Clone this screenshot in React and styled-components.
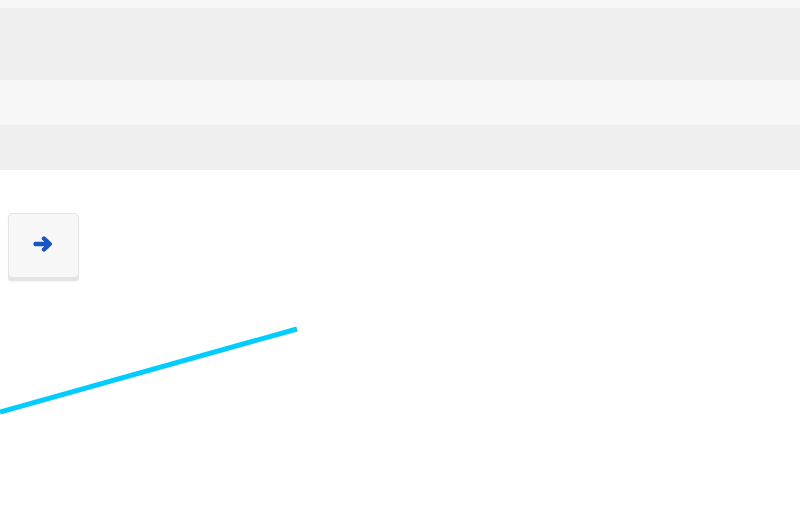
import React from 'react';
import styled, { createGlobalStyle } from 'styled-components';

const Global = createGlobalStyle`
  html, body {
    margin: 0;
    padding: 0;
    background: #fff;
    font-family: "Open Sans", "Liberation Sans", sans-serif;
  }
`;

const Page = styled.div`
  width: 800px;
  height: 510px;
  overflow: hidden;
  display: flex;
  flex-direction: column;
`;

const Band = styled.div`
  height: ${(p) => p.h}px;
  background: ${(p) => (p.light ? '#f7f7f7' : '#efefef')};
`;

const Body = styled.div`
  padding: 43px 8px 0;
  display: flex;
  flex-direction: column;
`;

const NextButton = styled.button`
  width: 71px;
  height: 65px;
  box-sizing: border-box;
  display: flex;
  align-items: center;
  justify-content: center;
  padding: 0 2px 3px 0;
  background: #f7f7f7;
  border: 1px solid #e4e4e4;
  border-radius: 4px;
  box-shadow: 0 3px 0 #e4e4e4, 0 4px 2px rgba(0, 0, 0, 0.05);
  cursor: pointer;
`;

const Canvas = styled.svg`
  display: block;
  margin: 43px 0 0 -8px;
`;

const ArrowIcon = () => (
  <svg width="20" height="16" viewBox="0 0 20 16">
    <path
      d="M2.5 8H16.5M11 2.5L16.8 8L11 13.5"
      fill="none"
      stroke="#1a55c5"
      strokeWidth="4.4"
      strokeLinecap="round"
      strokeLinejoin="round"
    />
  </svg>
);

export default function App() {
  return (
    <Page>
      <Global />
      <Band h={8} light />
      <Band h={72} />
      <Band h={45} light />
      <Band h={45} />
      <Body>
        <NextButton aria-label="next">
          <ArrowIcon />
        </NextButton>
        <Canvas width="320" height="140">
          <line x1="0" y1="91" x2="297" y2="8" stroke="#00ccfe" strokeWidth="5" />
        </Canvas>
      </Body>
    </Page>
  );
}
